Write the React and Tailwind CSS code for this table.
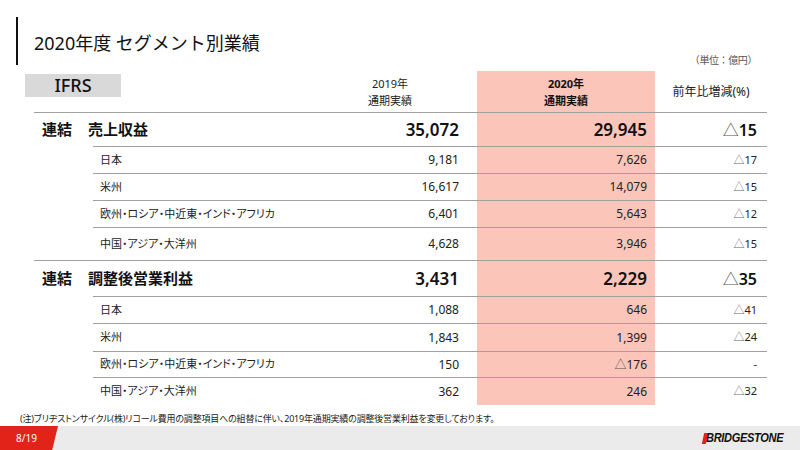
import React from 'react';

const font = { fontFamily: '"Noto Sans", "Noto Sans CJK JP", sans-serif' };

const cols = 'grid grid-cols-[286px_140px_17px_178px_112px]';

const sales = [
    ['日本', '9,181', '7,626', '△17', 'h-[26px]'],
    ['米州', '16,617', '14,079', '△15', 'h-[26px]'],
    ['欧州・ロシア・中近東・インド・アフリカ', '6,401', '5,643', '△12', 'h-[26px]'],
    ['中国・アジア・大洋州', '4,628', '3,946', '△15', 'h-[32px]'],
];

const profit = [
    ['日本', '1,088', '646', '△41', 'h-[26px]'],
    ['米州', '1,843', '1,399', '△24', 'h-[27px]'],
    ['欧州・ロシア・中近東・インド・アフリカ', '150', '△176', '-', 'h-[25px]'],
    ['中国・アジア・大洋州', '362', '246', '△32', 'h-[27px]'],
];

const Line = ({ partial }) => (
    <div className={cols + ' h-px'}>
        <div className={partial ? 'ml-[59px] bg-[#a0a0a0]' : 'bg-[#a0a0a0]'}></div>
        <div className="bg-[#a0a0a0]"></div>
        <div className="bg-[#a0a0a0]"></div>
        <div className="bg-[#a0a0a0]"></div>
        <div className="bg-[#a0a0a0]"></div>
    </div>
);

const MainRow = ({ label, a, b, c, h }) => (
    <div className={cols + ' ' + h + ' items-stretch text-[#111]'}>
        <div className="flex items-center pl-[8px] text-[15px] font-bold">
            <span className="w-[46px]">連結</span>
            <span>{label}</span>
        </div>
        <div className="flex items-center justify-end pr-[1px] text-[17px] font-semibold">{a}</div>
        <div></div>
        <div className="flex items-center justify-end pr-[8px] bg-[#fbc5b9] text-[17px] font-semibold">{b}</div>
        <div className="flex items-center justify-end pr-[10px] text-[16px] font-semibold">
            <span className="font-normal text-[#555]">△</span>{c.slice(1)}
        </div>
    </div>
);

const SubRow = ({ r }) => {
    const [label, a, b, c, h] = r;
    return (
        <div className={cols + ' ' + h + ' items-stretch text-[12px] text-[#222]'}>
            <div className="flex items-center pl-[66px] text-[11px] [font-feature-settings:'palt']">{label}</div>
            <div className="flex items-center justify-end pr-[1px]">{a}</div>
            <div></div>
            <div className="flex items-center justify-end pr-[8px] bg-[#fbc5b9]">
                {b.startsWith('△') ? <><span className="text-[#555]">△</span>{b.slice(1)}</> : b}
            </div>
            <div className="flex items-center justify-end pr-[10px] text-[11px]">
                {c.startsWith('△') ? <><span className="text-[#666]">△</span>{c.slice(1)}</> : c}
            </div>
        </div>
    );
};

export default function App() {
    return (
        <div className="w-[800px] h-[450px] bg-white flex flex-col overflow-hidden" style={font}>
            <div className="h-[71px] flex pl-4 pr-[43px]">
                <div className="mt-[17px] w-[2px] h-[48px] bg-[#111]"></div>
                <div className="mt-[30px] ml-4 text-[18px] leading-[26px] text-[#111] whitespace-nowrap">2020年度 セグメント別業績</div>
                <div className="flex-1"></div>
                <div className="self-end mb-[3px] text-[10px] text-[#555] tracking-[-0.04em]">（単位：億円）</div>
            </div>

            <div className="ml-[34px]">
                <div className={cols + ' h-[41px] text-[#222]'}>
                    <div className="pt-[3px]">
                        <div className="ml-[-9px] w-[96px] h-[23px] bg-[#d9d9d9] flex items-center justify-center text-[18px] font-medium text-[#111]">IFRS</div>
                    </div>
                    <div className="flex flex-col items-center justify-center text-[11px] leading-[17px]">
                        <span>2019年</span>
                        <span>通期実績</span>
                    </div>
                    <div></div>
                    <div className="flex flex-col items-center justify-center bg-[#fbc5b9] text-[11px] leading-[17px] font-bold text-[#111]">
                        <span>2020年</span>
                        <span>通期実績</span>
                    </div>
                    <div className="flex items-center justify-center text-[12px]">前年比増減(%)</div>
                </div>
                <Line />
                <MainRow label="売上収益" a="35,072" b="29,945" c="△15" h="h-[33px]" />
                <Line partial />
                {sales.map((r, i) => (
                    <React.Fragment key={r[0]}>
                        <SubRow r={r} />
                        {i < sales.length - 1 && <Line partial />}
                    </React.Fragment>
                ))}
                <Line />
                <MainRow label="調整後営業利益" a="3,431" b="2,229" c="△35" h="h-[35px]" />
                <Line partial />
                {profit.map((r, i) => (
                    <React.Fragment key={r[0]}>
                        <SubRow r={r} />
                        {i < profit.length - 1 && <Line partial />}
                    </React.Fragment>
                ))}
            </div>

            <div className="h-[21px] pt-[8px] pl-5 text-[9px] leading-[12px] text-[#222] whitespace-nowrap [font-feature-settings:'palt'] tracking-[-0.02em]">
                (注)ブリヂストンサイクル(株)リコール費用の調整項目への組替に伴い、2019年通期実績の調整後営業利益を変更しております。
            </div>

            <div className="h-[24px] bg-[#ebebeb] flex items-center justify-between">
                <div className="h-full w-[58px] bg-[#e2231a] [clip-path:polygon(0_0,100%_0,90%_100%,0_100%)] flex items-center pl-4 text-[10px] text-white">8/19</div>
                <div className="mr-[3px] flex items-center">
                    <span className="w-[4px] h-[11px] bg-[#e2231a] -skew-x-12 mr-[-1px]"></span>
                    <span className="text-[13px] font-black italic tracking-[-0.03em] text-[#111] scale-x-85 origin-left" style={{ fontFamily: '"Liberation Sans", sans-serif' }}>BRIDGESTONE</span>
                </div>
            </div>
        </div>
    );
}
